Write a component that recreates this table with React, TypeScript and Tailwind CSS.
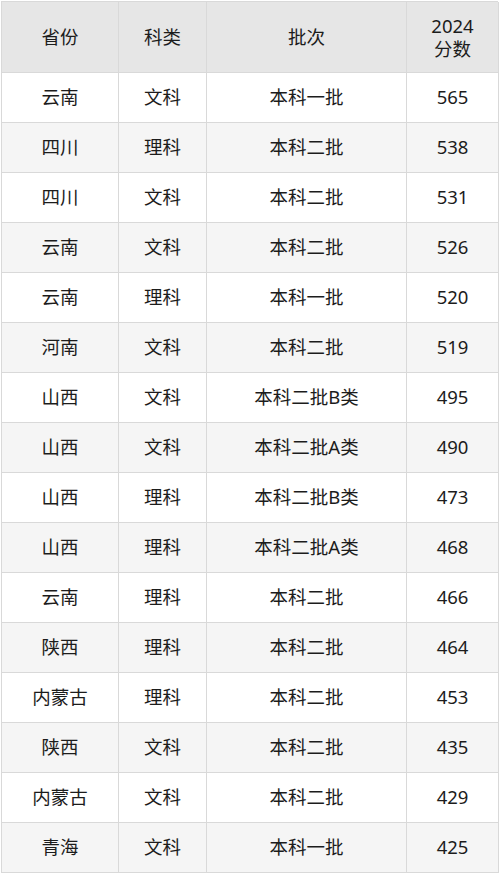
import React from "react";

const rows: [string, string, string, string][] = [
  ["云南", "文科", "本科一批", "565"],
  ["四川", "理科", "本科二批", "538"],
  ["四川", "文科", "本科二批", "531"],
  ["云南", "文科", "本科二批", "526"],
  ["云南", "理科", "本科一批", "520"],
  ["河南", "文科", "本科二批", "519"],
  ["山西", "文科", "本科二批B类", "495"],
  ["山西", "文科", "本科二批A类", "490"],
  ["山西", "理科", "本科二批B类", "473"],
  ["山西", "理科", "本科二批A类", "468"],
  ["云南", "理科", "本科二批", "466"],
  ["陕西", "理科", "本科二批", "464"],
  ["内蒙古", "理科", "本科二批", "453"],
  ["陕西", "文科", "本科二批", "435"],
  ["内蒙古", "文科", "本科二批", "429"],
  ["青海", "文科", "本科一批", "425"],
];

export default function App() {
  return (
    <div
      className="w-[500px] h-[873px] bg-white pl-[1px] pt-[1px] text-[#1c1c1c]"
      style={{ fontFamily: '"Noto Sans", "Noto Sans CJK SC", sans-serif' }}
    >
      <div className="grid grid-cols-[117px_88px_200px_92px] w-[497px] border-l border-t border-[#d9d9d9] text-[18.5px] leading-[22px]">
        {["省份", "科类", "批次"].map((h) => (
          <div
            key={h}
            className="h-[71px] flex items-center justify-center bg-[#e6e6e6] border-r border-b border-[#d9d9d9]"
          >
            {h}
          </div>
        ))}
        <div className="h-[71px] flex flex-col items-center justify-center bg-[#e6e6e6] border-r border-b border-[#d9d9d9] leading-[23px]">
          <span>2024</span>
          <span>分数</span>
        </div>
        {rows.map((r, i) => (
          <React.Fragment key={i}>
            {r.map((c, j) => (
              <div
                key={j}
                className={`h-[50px] flex items-center justify-center pb-[1px] border-r border-b border-[#d9d9d9] ${
                  i % 2 === 0 ? "bg-white" : "bg-[#f5f5f5]"
                }`}
              >
                {c}
              </div>
            ))}
          </React.Fragment>
        ))}
      </div>
    </div>
  );
}
